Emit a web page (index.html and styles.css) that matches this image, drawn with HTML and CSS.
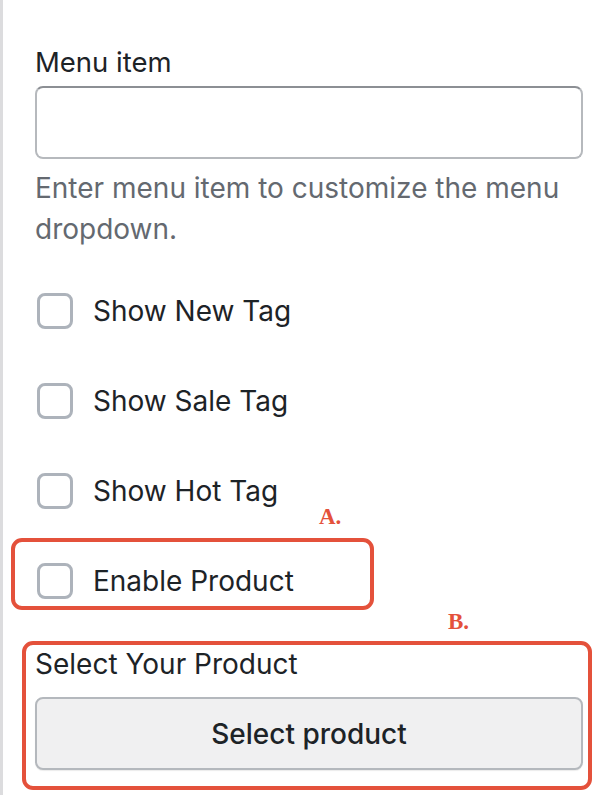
FILE: index.html
```html
<!DOCTYPE html>
<html lang="en">
<head>
<meta charset="utf-8">
<title>Menu item settings</title>
<link rel="stylesheet" href="styles.css">
</head>
<body>
<div class="panel">
  <label class="field-label" for="menu-item">Menu item</label>
  <input class="text-input" id="menu-item" type="text">
  <p class="help">Enter menu item to customize the menu dropdown.</p>

  <div class="checks">
    <label class="check-row"><span class="box"></span><span class="check-text">Show New Tag</span></label>
    <label class="check-row"><span class="box"></span><span class="check-text">Show Sale Tag</span></label>
    <label class="check-row"><span class="box"></span><span class="check-text">Show Hot Tag</span></label>
    <label class="check-row annot annot-a"><span class="box"></span><span class="check-text">Enable Product</span><span class="mark mark-a">A.</span></label>
  </div>

  <div class="product annot annot-b">
    <span class="mark mark-b">B.</span>
    <div class="product-label">Select Your Product</div>
    <button class="select-btn" type="button">Select product</button>
  </div>
</div>
</body>
</html>
```

FILE: styles.css
```css
html, body {
  margin: 0;
  padding: 0;
  background: #ffffff;
}

body {
  font-family: Inter, "Noto Sans", "Liberation Sans", sans-serif;
  color: #1d2327;
}

.panel {
  box-sizing: border-box;
  min-height: 795px;
  border-left: 3px solid #dcdcde;
  padding: 44px 21px 0 32px;
  display: flex;
  flex-direction: column;
}

.field-label {
  display: block;
  font-size: 27.5px;
  line-height: 36px;
  margin-bottom: 6px;
}

.text-input {
  box-sizing: border-box;
  width: 100%;
  height: 73px;
  margin: 0;
  border: 2px solid #b6b9bd;
  border-top-color: #8c8f94;
  border-radius: 8px;
  background: #fff;
  font: inherit;
}

.help {
  margin: 9px 0 0;
  font-size: 28px;
  line-height: 41px;
  color: #646970;
}

.checks {
  display: flex;
  flex-direction: column;
  gap: 54px;
  margin-top: 43px;
}

.check-row {
  display: flex;
  align-items: center;
  height: 36px;
  font-size: 28px;
  line-height: 36px;
}

.box {
  box-sizing: border-box;
  width: 36px;
  height: 36px;
  margin-left: 2px;
  border: 3px solid #adb3bb;
  border-radius: 8px;
  background: #fff;
  flex: none;
}

.check-text {
  margin-left: 20px;
}

.annot {
  position: relative;
}

.annot::after {
  content: "";
  position: absolute;
  border: 4px solid #e4513b;
  border-radius: 11px;
  pointer-events: none;
}

.annot-a::after {
  left: -24px;
  top: -25px;
  width: 363px;
  height: 72px;
  box-sizing: border-box;
}

.annot-b::after {
  left: -13px;
  right: -9px;
  top: -5px;
  bottom: -20px;
}

.mark {
  position: absolute;
  font-family: "Liberation Serif", serif;
  font-weight: bold;
  font-size: 23px;
  line-height: 23px;
  color: #e4513b;
}

.mark-a {
  left: 284px;
  top: -58px;
}

.mark-b {
  left: 413px;
  top: -36px;
}

.product {
  margin-top: 47px;
  display: flex;
  flex-direction: column;
}

.product-label {
  font-size: 28px;
  line-height: 36px;
}

.select-btn {
  box-sizing: border-box;
  margin-top: 15px;
  width: 100%;
  height: 73px;
  border: 2px solid #b4b8bd;
  border-radius: 8px;
  background: #f0f0f1;
  box-shadow: 0 1px 1px rgba(0, 0, 0, 0.08);
  font-family: inherit;
  font-size: 28px;
  font-weight: 500;
  color: #1d2327;
}
```
